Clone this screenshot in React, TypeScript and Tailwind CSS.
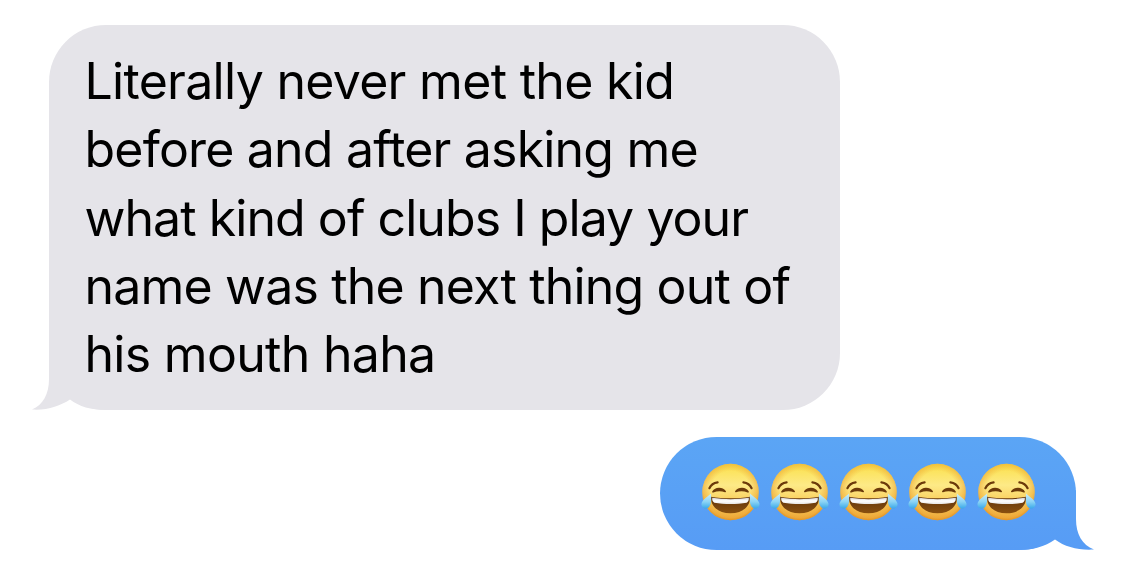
function JoyEmoji() {
  return (
    <svg viewBox="0 0 69 64" className="h-16 w-[69px]" role="img" aria-label="Face with tears of joy">
      <circle cx="34.5" cy="32" r="28.2" fill="url(#face)" />
      <circle cx="34.5" cy="32" r="28.2" fill="url(#rim)" />
      {/* eyebrows */}
      <path d="M13.4 28.2c1.3-2.9 4-5.2 8.2-5.8M55.6 28.2c-1.3-2.9-4-5.2-8.2-5.8" fill="none" stroke="#6b3a0a" strokeWidth="2.2" strokeLinecap="round" />
      {/* closed eyes */}
      <path d="M17 31.8c2.8-4.2 8.8-4.4 12.2-.4-4-1.200-8.200-1.100-12.200.4ZM52 31.800c-2.800-4.200-8.800-4.400-12.200-.4 4-1.200 8.200-1.100 12.200.4Z" fill="#6b3a0a" stroke="#6b3a0a" strokeWidth="1.6" strokeLinejoin="round" />
      {/* mouth */}
      <path d="M15 36.800c12.500 2 26.500 2 39 0 .5 9.500-7.500 16.500-19.500 16.500s-20-7-19.500-16.500Z" fill="url(#mouth)" />
      <path d="M16.200 37.800c12 1.900 24.600 1.900 36.600 0 .3 2.100-.5 3.900-2.100 5-10.200 1.700-22.200 1.700-32.400 0-1.600-1.100-2.400-2.900-2.100-5Z" fill="url(#teeth)" />
      {/* tears */}
      <path d="M15 33.500c-2.200 2.300-9 6-9.500 10.200-.4 4.300 4.500 6.300 7.400 3.500 2.600-2.500 2.500-8.400 2.100-13.700Z" fill="url(#tear)" />
      <path d="M54 33.500c2.200 2.300 9 6 9.500 10.200.4 4.300-4.500 6.300-7.400 3.500-2.600-2.500-2.500-8.400-2.100-13.700Z" fill="url(#tear)" />
    </svg>
  );
}

function EmojiGradients() {
  return (
    <svg className="absolute h-0 w-0" aria-hidden="true">
      <defs>
        <linearGradient id="face" x1="0" y1="0" x2="0" y2="1">
          <stop offset="0" stopColor="#fbe04a" />
          <stop offset="0.38" stopColor="#fdea87" />
          <stop offset="0.65" stopColor="#fad060" />
          <stop offset="1" stopColor="#f0b043" />
        </linearGradient>
        <radialGradient id="rim" cx="0.5" cy="0.48" r="0.53">
          <stop offset="0.66" stopColor="#e99a27" stopOpacity="0" />
          <stop offset="0.9" stopColor="#e99a27" stopOpacity="0.45" />
          <stop offset="1" stopColor="#d98318" stopOpacity="0.85" />
        </radialGradient>
        <linearGradient id="mouth" x1="0" y1="0" x2="0" y2="1">
          <stop offset="0" stopColor="#60330b" />
          <stop offset="1" stopColor="#8a500f" />
        </linearGradient>
        <linearGradient id="teeth" x1="0" y1="0" x2="0" y2="1">
          <stop offset="0" stopColor="#d5d3d6" />
          <stop offset="0.5" stopColor="#ffffff" />
          <stop offset="1" stopColor="#e7e5e5" />
        </linearGradient>
        <linearGradient id="tear" x1="0" y1="0" x2="0" y2="1">
          <stop offset="0" stopColor="#cceefb" />
          <stop offset="0.55" stopColor="#8bd3f5" />
          <stop offset="1" stopColor="#3ba9e9" />
        </linearGradient>
      </defs>
    </svg>
  );
}

export default function App() {
  return (
    <main className="flex h-[572px] w-[1125px] flex-col overflow-hidden bg-white pt-[25px] pr-[49px] pl-[49px]">
      <EmojiGradients />

      {/* Received */}
      <div className="relative h-[384.5px] w-[791px] self-start rounded-[57px] bg-[#e5e4e9] pt-[22px] pl-[35.5px]">
        <svg viewBox="0 0 80 60" className="absolute bottom-0 -left-[17px] h-[60px] w-20" aria-hidden="true">
          <path d="M17 0V29C17 44 11 55 0 59.5C15 60.5 28 56 38 49.5C47 56.5 59 60 74 60V0Z" fill="#e5e4e9" />
        </svg>
        <p className="relative flex flex-col font-['Inter',sans-serif] text-[50px] leading-[68.3px] whitespace-nowrap text-black">
          <span className="tracking-[-0.7px]">Literally never met the kid</span>
          <span className="tracking-[-0.81px]">before and after asking me</span>
          <span className="tracking-[-0.94px]">what kind of clubs I play your</span>
          <span className="tracking-[-0.82px]">name was the next thing out of</span>
          <span className="tracking-[-0.7px]">his mouth haha</span>
        </p>
      </div>

      {/* Sent */}
      <div className="relative mt-[27.5px] flex h-[113px] w-[416px] self-end rounded-[56.5px] bg-linear-to-b from-[#5ba5f5] to-[#579cf5] pt-[23px] pl-[35.5px]">
        <svg viewBox="0 0 80 60" className="absolute -right-[18px] bottom-0 h-[60px] w-20" aria-hidden="true">
          <path d="M62 0V29C62 44 68 55 80 59.5C65 60.5 51 57 41 49.5C31 57 18 60 4 60V28Z" fill="url(#sent)" />
          <defs>
            <linearGradient id="sent" gradientUnits="userSpaceOnUse" x1="0" y1="-53" x2="0" y2="60">
              <stop offset="0" stopColor="#5ba5f5" />
              <stop offset="1" stopColor="#579cf5" />
            </linearGradient>
          </defs>
        </svg>
        <div className="relative flex">
          <JoyEmoji />
          <JoyEmoji />
          <JoyEmoji />
          <JoyEmoji />
          <JoyEmoji />
        </div>
      </div>
    </main>
  );
}
